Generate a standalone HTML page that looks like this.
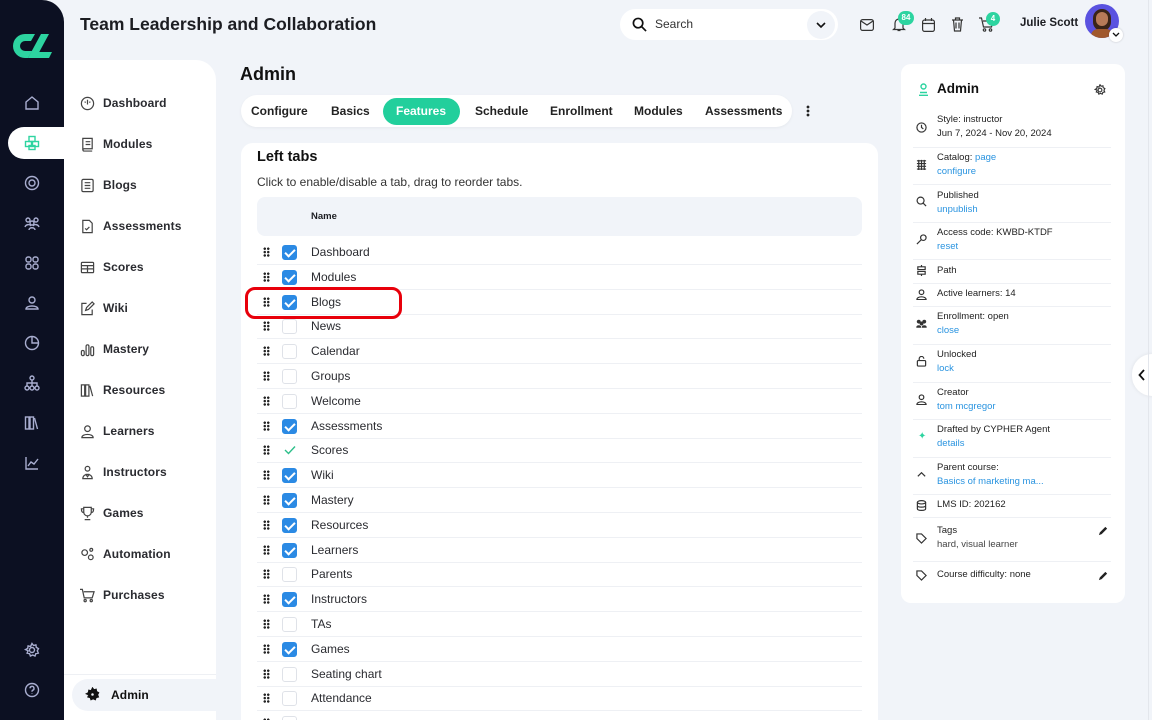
<!DOCTYPE html>
<html><head><meta charset="utf-8"><style>
*{box-sizing:border-box;margin:0;padding:0}
html{width:1152px;height:720px;overflow:hidden}
body{width:1152px;height:720px;overflow:hidden;background:#f1f4f9;font-family:"Liberation Sans",sans-serif;color:#1c1d22;position:relative}
.abs{position:absolute}
.rail{left:0;top:0;width:64px;height:720px;background:#0c1022;border-top-right-radius:22px}
.rail svg{position:absolute;left:24px;width:16px;height:16px;fill:none;stroke:#a9aed0;stroke-width:1.4}
.nav{left:64px;top:60px;width:152px;height:660px;background:#fff;border-top-right-radius:20px;overflow:hidden}
.ni{position:absolute;left:39px;font-size:12px;font-weight:bold;color:#2a2b30;letter-spacing:.1px}
.nv svg{position:absolute;left:16px;width:15px;height:15px;fill:none;stroke:#444;stroke-width:1.3}
.tabs{left:241px;top:95px;width:551px;height:32px;background:#fff;border-radius:16px;box-shadow:0 1px 3px rgba(0,0,0,.05)}
.tab{position:absolute;top:0;height:32px;line-height:32px;font-size:12px;font-weight:bold;color:#222}
.card{left:241px;top:143px;width:637px;height:577px;background:#fff;border-radius:12px 12px 0 0;overflow:hidden}
.row{position:absolute;left:16px;width:605px;height:25px;border-bottom:1px solid #eef0f4}
.row .d{position:absolute;left:6px;top:7px;width:7px;height:10px;background-image:radial-gradient(circle,#222 1.1px,transparent 1.3px);background-size:3.5px 3.4px}
.row .c{position:absolute;left:25px;top:5px;width:15px;height:15px;border-radius:3px;border:1px solid #dfe2e8;background:#fff}
.row .c.on{background:#2b8ae4;border-color:#2b8ae4}
.row .c.on:after{content:"";position:absolute;left:4px;top:1px;width:4px;height:8px;border:solid #fff;border-width:0 2px 2px 0;transform:rotate(45deg)}
.row .t{position:absolute;left:54px;top:5px;font-size:12px;color:#2a2b30}
.rp{left:901px;top:64px;width:224px;height:539px;background:#fff;border-radius:10px}
.it{position:absolute;left:36px;font-size:9.5px;line-height:14px;color:#222}
.it a{color:#2a94e0;text-decoration:none}
.sep{position:absolute;left:12px;width:198px;height:1px;background:#eef0f4}
.ic{position:absolute;left:15px;width:11px;height:11px;fill:none;stroke:#333;stroke-width:1.3}
</style></head><body>
<div class="abs rail">
<svg viewBox="0 0 40 26" style="left:12px;top:33px;width:40px;height:26px;stroke:none"><path d="M13 1A12 12 0 1 0 13 25h3l4-7h-7a5 5 0 0 1 0-10h6l4-7z" fill="#2dd4a0"/><path d="M29 1h8L24 25h-8z" fill="#2dd4a0"/><path d="M26 19h14l-3 6H23z" fill="#2dd4a0"/></svg>
<svg style="top:95px" viewBox="0 0 16 16"><path d="M2 7l6-5 6 5v7H2z"/></svg>
<div class="abs" style="left:8px;top:127px;width:56px;height:32px;background:#fff;border-radius:16px 0 0 16px"></div>
<svg style="top:135px;stroke:#2dd4a0" viewBox="0 0 16 16"><rect x="5" y="1.5" width="6" height="5"/><rect x="1.5" y="6.5" width="6" height="5"/><rect x="8.5" y="6.5" width="6" height="5"/><rect x="5" y="10.5" width="6" height="4"/></svg>
<svg style="top:175px" viewBox="0 0 16 16"><circle cx="8" cy="8" r="6.5"/><circle cx="8" cy="8" r="3"/></svg>
<svg style="top:215px" viewBox="0 0 16 16"><circle cx="4" cy="5" r="2"/><circle cx="12" cy="5" r="2"/><circle cx="8" cy="8" r="2"/><path d="M1 12c1-3 5-3 6-1M9 11c1-2 5-2 6 1M5 15c0-3 6-3 6 0"/></svg>
<svg style="top:255px" viewBox="0 0 16 16"><rect x="2" y="2" width="5" height="5" rx="2"/><rect x="9" y="2" width="5" height="5" rx="2"/><rect x="2" y="9" width="5" height="5" rx="2"/><rect x="9" y="9" width="5" height="5" rx="2"/></svg>
<svg style="top:295px" viewBox="0 0 16 16"><circle cx="8" cy="5" r="3"/><path d="M2 14c0-4 12-4 12 0z"/></svg>
<svg style="top:335px" viewBox="0 0 16 16"><circle cx="8" cy="8" r="6.5"/><path d="M8 2v6h6"/></svg>
<svg style="top:375px" viewBox="0 0 16 16"><circle cx="8" cy="3" r="2"/><circle cx="3" cy="13" r="2"/><circle cx="8" cy="13" r="2"/><circle cx="13" cy="13" r="2"/><path d="M8 5v6M3 11V8h10v3"/></svg>
<svg style="top:415px" viewBox="0 0 16 16"><rect x="1.5" y="2" width="3.5" height="12"/><rect x="6" y="2" width="3.5" height="12"/><path d="M10.5 3l3 11"/></svg>
<svg style="top:455px" viewBox="0 0 16 16"><path d="M2 2v12h12M4 11l3-4 3 2 4-5"/></svg>
<svg style="top:642px" viewBox="0 0 16 16"><circle cx="8" cy="8" r="2.5"/><path d="M8 1.5l1.5 2 2.4-.6.4 2.5 2.2 1.2-1.2 2.2 1 2.3-2.5.6-.8 2.3-2.3-1-2.3 1-.8-2.3-2.5-.6 1-2.3L1.5 7.6l2.2-1.2.4-2.5 2.4.6z"/></svg>
<svg style="top:682px" viewBox="0 0 16 16"><circle cx="8" cy="8" r="6.5"/><path d="M6 6.3a2 2 0 1 1 2.5 2c-.5.2-.5.6-.5 1.4M8 11.5v.5"/></svg>
</div>

<div class="abs" style="left:80px;top:14px;font-size:17.5px;font-weight:bold;color:#1c1d22">Team Leadership and Collaboration</div>

<div class="abs" style="left:620px;top:9px;width:218px;height:31px;background:#fff;border-radius:16px"></div>
<svg class="abs" style="left:632px;top:17px" width="15" height="15" viewBox="0 0 16 16" fill="none" stroke="#111" stroke-width="1.8"><circle cx="6.5" cy="6.5" r="5"/><path d="M10 10l5 5"/></svg>
<div class="abs" style="left:655px;top:17px;font-size:12px;color:#333">Search</div>
<div class="abs" style="left:807px;top:11px;width:28px;height:28px;border-radius:14px;background:#f1f4f9"></div>
<svg class="abs" style="left:815px;top:19px" width="12" height="12" viewBox="0 0 12 12" fill="none" stroke="#111" stroke-width="1.6"><path d="M2 4l4 4 4-4"/></svg>
<svg class="abs" style="left:860px;top:19px" width="14" height="12" viewBox="0 0 14 12" fill="none" stroke="#333" stroke-width="1.2"><rect x=".6" y=".6" width="12.8" height="10.8" rx="2"/><path d="M1 2l6 4 6-4"/></svg>
<svg class="abs" style="left:892px;top:17px" width="14" height="15" viewBox="0 0 14 15" fill="none" stroke="#333" stroke-width="1.2"><path d="M3 11V6a4 4 0 0 1 8 0v5l1.5 1.5h-11zM5.5 13.5h3"/></svg>
<div class="abs" style="left:898px;top:11px;width:16px;height:14px;border-radius:8px;background:#2dd4a0;color:#fff;font-size:8px;font-weight:bold;text-align:center;line-height:14px">84</div>
<svg class="abs" style="left:922px;top:18px" width="13" height="14" viewBox="0 0 13 14" fill="none" stroke="#333" stroke-width="1.2"><rect x=".6" y="2" width="11.8" height="11.4" rx="2"/><path d="M.6 5.5h11.8M3.5 0v3M9.5 0v3"/></svg>
<svg class="abs" style="left:951px;top:17px" width="13" height="15" viewBox="0 0 13 15" fill="none" stroke="#333" stroke-width="1.2"><path d="M1 3h11M4.5 3V1h4v2M2.5 3l1 11h6l1-11M5 5.5v6M8 5.5v6"/></svg>
<svg class="abs" style="left:979px;top:17px" width="16" height="15" viewBox="0 0 16 15" fill="none" stroke="#333" stroke-width="1.2"><path d="M0 1h2.5l2 9h8l1.5-6H4"/><circle cx="5.5" cy="13" r="1.2"/><circle cx="11.5" cy="13" r="1.2"/></svg>
<div class="abs" style="left:986px;top:12px;width:14px;height:14px;border-radius:7px;background:#2dd4a0;color:#fff;font-size:8px;font-weight:bold;text-align:center;line-height:14px">4</div>
<div class="abs" style="left:1020px;top:17px;font-size:11.5px;font-weight:bold">Julie Scott</div>
<div class="abs" style="left:1085px;top:4px;width:34px;height:34px;border-radius:17px;background:#5a52e0;overflow:hidden">
<div class="abs" style="left:8px;top:5px;width:18px;height:22px;border-radius:9px;background:#3a2418"></div>
<div class="abs" style="left:11px;top:8px;width:12px;height:14px;border-radius:6px;background:#b77a58"></div>
<div class="abs" style="left:6px;top:25px;width:22px;height:14px;border-radius:8px;background:#a0582c"></div></div>
<div class="abs" style="left:1109px;top:28px;width:14px;height:14px;border-radius:7px;background:#fff;box-shadow:0 0 2px rgba(0,0,0,.2)"></div>
<svg class="abs" style="left:1112px;top:32px" width="8" height="6" viewBox="0 0 8 6" fill="none" stroke="#111" stroke-width="1.3"><path d="M1 1l3 3 3-3"/></svg>

<div class="abs nav nv">
<svg style="top:36px" viewBox="0 0 16 16"><circle cx="8" cy="8" r="6.5"/><path d="M8 4v5M5 6l1 1M11 6l-1 1"/></svg><div class="ni" style="top:36px">Dashboard</div>
<svg style="top:77px" viewBox="0 0 16 16"><path d="M3 1.5h10v11H4.5A1.5 1.5 0 0 0 3 14zM3 14a1.5 1.5 0 0 0 1.5 1h8.5M6 5h5M6 8h5"/></svg><div class="ni" style="top:77px">Modules</div>
<svg style="top:118px" viewBox="0 0 16 16"><rect x="2" y="1.5" width="12" height="13" rx="1.5"/><path d="M5 5h6M5 8h6M5 11h6"/></svg><div class="ni" style="top:118px">Blogs</div>
<svg style="top:159px" viewBox="0 0 16 16"><path d="M3 1.5h7l3 3v10H3zM5.5 10l1.5 1.5 3-3"/></svg><div class="ni" style="top:159px">Assessments</div>
<svg style="top:200px" viewBox="0 0 16 16"><rect x="1.5" y="2.5" width="13" height="11" rx="1"/><path d="M1.5 6h13M1.5 9.5h13M8 6v7.5"/></svg><div class="ni" style="top:200px">Scores</div>
<svg style="top:241px" viewBox="0 0 16 16"><path d="M7 2.5H2v12h11V9M6 10l1-3 6-6 2 2-6 6z"/></svg><div class="ni" style="top:241px">Wiki</div>
<svg style="top:282px" viewBox="0 0 16 16"><rect x="1.5" y="9" width="3" height="5.5" rx="1.5"/><rect x="6.5" y="3" width="3" height="11.5" rx="1.5"/><rect x="11.5" y="5" width="3" height="9.5" rx="1.5"/></svg><div class="ni" style="top:282px">Mastery</div>
<svg style="top:323px" viewBox="0 0 16 16"><rect x="1.5" y="2" width="3.5" height="12"/><rect x="6" y="2" width="3.5" height="12"/><path d="M10.5 3l3 11"/></svg><div class="ni" style="top:323px">Resources</div>
<svg style="top:364px" viewBox="0 0 16 16"><circle cx="8" cy="5" r="3"/><path d="M2 14.5c0-4.5 12-4.5 12 0z"/></svg><div class="ni" style="top:364px">Learners</div>
<svg style="top:405px" viewBox="0 0 16 16"><circle cx="8" cy="4" r="2.5"/><path d="M3 14.5c0-6 10-6 10 0zM6 9.5l2 3 2-3"/></svg><div class="ni" style="top:405px">Instructors</div>
<svg style="top:446px" viewBox="0 0 16 16"><path d="M4 1.5h8v5a4 4 0 0 1-8 0zM4 3H1.5c0 3 1 4 2.5 4M12 3h2.5c0 3-1 4-2.5 4M8 10.5v2M5 14.5h6"/></svg><div class="ni" style="top:446px">Games</div>
<svg style="top:487px" viewBox="0 0 16 16"><circle cx="5" cy="6" r="3"/><circle cx="11.5" cy="11" r="2.5"/><circle cx="12" cy="3" r="1.5"/></svg><div class="ni" style="top:487px">Automation</div>
<svg style="top:528px" viewBox="0 0 16 16"><path d="M0 1.5h2.5l2 9h8.5l2-6.5H4"/><circle cx="5.5" cy="13.5" r="1.2"/><circle cx="12" cy="13.5" r="1.2"/></svg><div class="ni" style="top:528px">Purchases</div>
<div class="abs" style="left:0;top:614px;width:152px;height:1px;background:#eef0f4"></div>
<div class="abs" style="left:8px;top:619px;width:144px;height:32px;border-radius:16px 0 0 16px;background:#f1f4f9"></div>
<svg style="top:627px;left:21px;fill:#111;stroke:#111" viewBox="0 0 16 16"><path d="M8 1l1.5 2 2.4-.6.4 2.5 2.2 1.2-1.2 2.2 1 2.3-2.5.6-.8 2.3-2.3-1-2.3 1-.8-2.3-2.5-.6 1-2.3L1.5 7.2l2.2-1.2.4-2.5 2.4.6z"/><circle cx="8" cy="8" r="2" fill="#f1f4f9"/></svg>
<div class="ni" style="top:628px;left:47px;color:#111">Admin</div>
</div>

<div class="abs" style="left:240px;top:64px;font-size:18px;font-weight:bold;color:#111">Admin</div>
<div class="abs tabs">
<div class="tab" style="left:10px">Configure</div>
<div class="tab" style="left:90px">Basics</div>
<div class="abs" style="left:142px;top:3px;width:77px;height:27px;border-radius:14px;background:#22cf9c"></div>
<div class="tab" style="left:155px;color:#fff">Features</div>
<div class="tab" style="left:234px">Schedule</div>
<div class="tab" style="left:309px">Enrollment</div>
<div class="tab" style="left:393px">Modules</div>
<div class="tab" style="left:464px">Assessments</div>
</div>
<div class="abs" style="left:806px;top:105px;width:4px;height:12px;background-image:radial-gradient(circle,#222 1.3px,transparent 1.5px);background-size:4px 4px"></div>

<div class="abs card">
<div class="abs" style="left:16px;top:6px;font-size:14.5px;font-weight:bold;color:#111">Left tabs</div>
<div class="abs" style="left:16px;top:32px;font-size:12px;color:#333">Click to enable/disable a tab, drag to reorder tabs.</div>
<div class="abs" style="left:16px;top:54px;width:605px;height:39px;border-radius:8px;background:#f1f4f9"></div>
<div class="abs" style="left:70px;top:68px;font-size:9.5px;font-weight:bold">Name</div>
<div class="row" style="top:97px"><i class="d"></i><i class="c on"></i><span class="t">Dashboard</span></div>
<div class="row" style="top:121.8px"><i class="d"></i><i class="c on"></i><span class="t">Modules</span></div>
<div class="row" style="top:146.6px"><i class="d"></i><i class="c on"></i><span class="t">Blogs</span></div>
<div class="row" style="top:171.4px"><i class="d"></i><i class="c"></i><span class="t">News</span></div>
<div class="row" style="top:196.2px"><i class="d"></i><i class="c"></i><span class="t">Calendar</span></div>
<div class="row" style="top:221px"><i class="d"></i><i class="c"></i><span class="t">Groups</span></div>
<div class="row" style="top:245.8px"><i class="d"></i><i class="c"></i><span class="t">Welcome</span></div>
<div class="row" style="top:270.6px"><i class="d"></i><i class="c on"></i><span class="t">Assessments</span></div>
<div class="row" style="top:295.4px"><i class="d"></i><svg class="abs" style="left:27px;top:7px" width="12" height="10" viewBox="0 0 12 10" fill="none" stroke="#2dbf8a" stroke-width="1.4"><path d="M1 5l3.5 3.5L11 1.5"/></svg><span class="t">Scores</span></div>
<div class="row" style="top:320.2px"><i class="d"></i><i class="c on"></i><span class="t">Wiki</span></div>
<div class="row" style="top:345px"><i class="d"></i><i class="c on"></i><span class="t">Mastery</span></div>
<div class="row" style="top:369.8px"><i class="d"></i><i class="c on"></i><span class="t">Resources</span></div>
<div class="row" style="top:394.6px"><i class="d"></i><i class="c on"></i><span class="t">Learners</span></div>
<div class="row" style="top:419.4px"><i class="d"></i><i class="c"></i><span class="t">Parents</span></div>
<div class="row" style="top:444.2px"><i class="d"></i><i class="c on"></i><span class="t">Instructors</span></div>
<div class="row" style="top:469px"><i class="d"></i><i class="c"></i><span class="t">TAs</span></div>
<div class="row" style="top:493.8px"><i class="d"></i><i class="c on"></i><span class="t">Games</span></div>
<div class="row" style="top:518.6px"><i class="d"></i><i class="c"></i><span class="t">Seating chart</span></div>
<div class="row" style="top:543.4px"><i class="d"></i><i class="c"></i><span class="t">Attendance</span></div>
<div class="row" style="top:568.2px"><i class="d"></i><i class="c"></i><span class="t"></span></div>
</div>
<div class="abs" style="left:245px;top:287px;width:157px;height:32px;border:3px solid #e8000b;border-radius:10px"></div>

<div class="abs rp">
<svg class="abs" style="left:17px;top:19px" width="11" height="13" viewBox="0 0 11 13" fill="none" stroke="#2dd4a0" stroke-width="1.4"><circle cx="5.5" cy="3.5" r="2.5"/><path d="M1 12.3h9M2 9.5h7"/></svg>
<div class="abs" style="left:36px;top:17px;font-size:13.5px;font-weight:bold;color:#111">Admin</div>
<svg class="abs" style="left:193px;top:20px" width="12" height="12" viewBox="0 0 16 16" fill="none" stroke="#333" stroke-width="1.5"><circle cx="8" cy="8" r="2.5"/><path d="M8 1l1.5 2 2.4-.6.4 2.5 2.2 1.2-1.2 2.2 1 2.3-2.5.6-.8 2.3-2.3-1-2.3 1-.8-2.3-2.5-.6 1-2.3L1.5 7.2l2.2-1.2.4-2.5 2.4.6z"/></svg>

<svg class="ic" style="top:58px" viewBox="0 0 12 12"><circle cx="6" cy="6" r="5"/><path d="M6 3v3l2 1.5"/></svg>
<div class="it" style="top:49px">Style: instructor<br>Jun 7, 2024 - Nov 20, 2024</div>
<div class="sep" style="top:83px"></div>
<svg class="ic" style="top:95px" viewBox="0 0 12 12"><path d="M1 2h10M1 5h10M1 8h10M1 11h10M3 1v11M6 1v11M9 1v11"/></svg>
<div class="it" style="top:87px">Catalog: <a>page</a><br><a>configure</a></div>
<div class="sep" style="top:120px"></div>
<svg class="ic" style="top:132px" viewBox="0 0 12 12"><circle cx="5" cy="5" r="3.8"/><path d="M8 8l3 3"/></svg>
<div class="it" style="top:125px">Published<br><a>unpublish</a></div>
<div class="sep" style="top:158px"></div>
<svg class="ic" style="top:170px" viewBox="0 0 12 12"><circle cx="8" cy="4" r="3"/><path d="M6 6l-5 5"/></svg>
<div class="it" style="top:162px">Access code: KWBD-KTDF<br><a>reset</a></div>
<div class="sep" style="top:195px"></div>
<svg class="ic" style="top:201px" viewBox="0 0 12 12"><path d="M2 2h8v3H2zM2 7h8v3H2zM6 0v2M6 10v2"/></svg>
<div class="it" style="top:200px">Path</div>
<div class="sep" style="top:219px"></div>
<svg class="ic" style="top:225px" viewBox="0 0 12 12"><circle cx="6" cy="3.5" r="2.5"/><path d="M1 11.5c0-4 10-4 10 0z"/></svg>
<div class="it" style="top:223px">Active learners: 14</div>
<div class="sep" style="top:242px"></div>
<svg class="ic" style="top:254px;fill:#333" viewBox="0 0 12 12"><circle cx="3" cy="4" r="1.5"/><circle cx="9" cy="4" r="1.5"/><circle cx="6" cy="6" r="1.5"/><path d="M1 10c0-2 4-2 4 0zM7 10c0-2 4-2 4 0z"/></svg>
<div class="it" style="top:246px">Enrollment: open<br><a>close</a></div>
<div class="sep" style="top:280px"></div>
<svg class="ic" style="top:292px" viewBox="0 0 12 12"><rect x="1.5" y="5" width="9" height="6" rx="1"/><path d="M3.5 5V3a2.5 2.5 0 0 1 5 0"/></svg>
<div class="it" style="top:284px">Unlocked<br><a>lock</a></div>
<div class="sep" style="top:318px"></div>
<svg class="ic" style="top:330px" viewBox="0 0 12 12"><circle cx="6" cy="3.5" r="2.5"/><path d="M1 11.5c0-4 10-4 10 0z"/></svg>
<div class="it" style="top:322px">Creator<br><a>tom mcgregor</a></div>
<div class="sep" style="top:355px"></div>
<div class="abs" style="left:17px;top:367px;color:#2dd4a0;font-size:10px">✦</div>
<div class="it" style="top:359px">Drafted by CYPHER Agent<br><a>details</a></div>
<div class="sep" style="top:393px"></div>
<svg class="ic" style="top:405px" viewBox="0 0 12 12"><path d="M2 8l4-4 4 4"/></svg>
<div class="it" style="top:397px">Parent course:<br><a>Basics of marketing ma...</a></div>
<div class="sep" style="top:430px"></div>
<svg class="ic" style="top:436px" viewBox="0 0 12 12"><ellipse cx="6" cy="2.5" rx="4.5" ry="1.8"/><path d="M1.5 2.5v7c0 2.4 9 2.4 9 0v-7M1.5 6c0 2.4 9 2.4 9 0"/></svg>
<div class="it" style="top:434px">LMS ID: 202162</div>
<div class="sep" style="top:453px"></div>
<svg class="ic" style="top:469px" viewBox="0 0 12 12"><path d="M1 1h5l5 5-5 5-5-5z"/></svg>
<div class="it" style="top:460px">Tags<br><span style="color:#444">hard, visual learner</span></div>
<svg class="abs" style="left:197px;top:461px" width="11" height="11" viewBox="0 0 12 12"><path d="M1 11l1-3 6-6 2 2-6 6z" fill="#222"/></svg>
<div class="sep" style="top:497px"></div>
<svg class="ic" style="top:506px" viewBox="0 0 12 12"><path d="M1 1h5l5 5-5 5-5-5z"/></svg>
<div class="it" style="top:504px">Course difficulty: none</div>
<svg class="abs" style="left:197px;top:506px" width="11" height="11" viewBox="0 0 12 12"><path d="M1 11l1-3 6-6 2 2-6 6z" fill="#222"/></svg>
</div>
<div class="abs" style="left:1132px;top:354px;width:40px;height:42px;border-radius:21px;background:#fff;box-shadow:0 0 4px rgba(0,0,0,.08)"></div>
<svg class="abs" style="left:1138px;top:369px" width="8" height="12" viewBox="0 0 8 12" fill="none" stroke="#111" stroke-width="1.8"><path d="M6 1L1.5 6 6 11"/></svg>
<div class="abs" style="left:1148px;top:0;width:1px;height:720px;background:#e3e6ec"></div>
</body></html>
